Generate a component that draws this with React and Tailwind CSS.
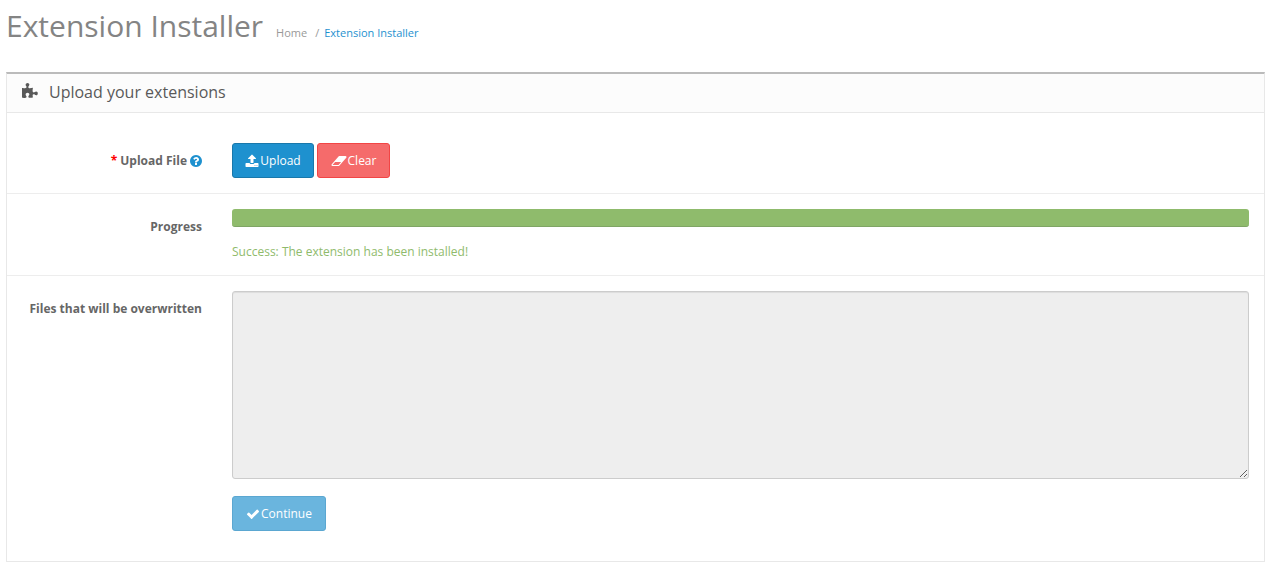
function PuzzleIcon({ className }) {
  return (
    <svg viewBox="0 0 1792 1792" fill="currentColor" className={className}>
      <path d="M1664 1098q0 81-44.5 135t-123.5 54q-41 0-77.5-17.5t-59-38-56.5-38-71-17.5q-110 0-110 124 0 39 16 115t15 115v5q-22 0-33 1-34 3-97.5 11.5t-115.5 13.5-98 5q-61 0-103-26.5t-42-83.5q0-37 17.5-71t38-56.5 38-59 17.5-77.5q0-79-54-123.5t-135-44.5q-84 0-143 45.5t-59 127.5q0 43 15 83t33.5 64.5 33.5 53 15 50.5q0 45-46 89-37 35-117 35-95 0-245-24-9-2-27.5-4t-27.5-4l-13-2q-2-1-3-1-2 0-2-1v-1024q2 1 17.5 3.5t34 5 21.5 3.5q150 24 245 24 80 0 117-35 46-44 46-89 0-22-15-50.5t-33.5-53-33.5-64.5-15-83q0-82 59-127.5t144-45.5q80 0 134 44.5t54 123.5q0 41-17.5 77.5t-38 59-38 56.5-17.5 71q0 57 42 83.5t103 26.5q64 0 180-15t163-17v2q-1 2-3.5 17.5t-5 34-3.5 21.5q-24 150-24 245 0 80 35 117 44 46 89 46 22 0 50.5-15t53-33.5 64.5-33.5 83-15q82 0 127.5 59t45.5 143z" />
    </svg>
  );
}

function UploadIcon({ className }) {
  return (
    <svg viewBox="0 0 1792 1792" fill="currentColor" className={className}>
      <path d="M1344 1472q0-26-19-45t-45-19-45 19-19 45 19 45 45 19 45-19 19-45zm256 0q0-26-19-45t-45-19-45 19-19 45 19 45 45 19 45-19 19-45zm128-224v320q0 40-28 68t-68 28h-1472q-40 0-68-28t-28-68v-320q0-40 28-68t68-28h427q21 56 70.5 92t110.5 36h256q61 0 110.5-36t70.5-92h427q40 0 68 28t28 68zm-325-648q-17 40-59 40h-256v448q0 26-19 45t-45 19h-256q-26 0-45-19t-19-45v-448h-256q-42 0-59-40-17-39 14-69l448-448q18-19 45-19t45 19l448 448q31 30 14 69z" />
    </svg>
  );
}

function EraserIcon({ className }) {
  return (
    <svg viewBox="0 0 2048 1792" fill="currentColor" className={className}>
      <path d="M960 1408l336-384h-768l-336 384h768zm1013-1077q15 34 9.5 71.5t-30.5 65.5l-896 1024q-38 44-96 44h-768q-38 0-69.5-20.5t-47.5-54.5q-15-34-9.5-71.5t30.5-65.5l896-1024q38-44 96-44h768q38 0 70 20.5t47 54.5z" />
    </svg>
  );
}

function CheckIcon({ className }) {
  return (
    <svg viewBox="0 0 1792 1792" fill="currentColor" className={className}>
      <path d="M1671 566q0 40-28 68l-724 724-136 136q-28 28-68 28t-68-28l-136-136-362-362q-28-28-28-68t28-68l136-136q28-28 68-28t68 28l294 295 656-657q28-28 68-28t68 28l136 136q28 28 28 68z" />
    </svg>
  );
}

function QuestionIcon({ className }) {
  return (
    <svg viewBox="0 0 1792 1792" fill="currentColor" className={className}>
      <path d="M1024 1376v-192q0-14-9-23t-23-9h-192q-14 0-23 9t-9 23v192q0 14 9 23t23 9h192q14 0 23-9t9-23zm256-672q0-88-55.5-163t-138.5-116-170-41q-243 0-371 213-15 24 8 42l132 100q7 6 19 6 16 0 25-12 53-68 86-92 34-24 86-24 48 0 85.5 26t37.5 59q0 38-20 61t-68 45q-63 28-115.5 86.5t-52.5 125.5v36q0 14 9 23t23 9h192q14 0 23-9t9-23q0-19 21.5-49.5t54.5-49.5q32-18 49-28.5t46-35 44.5-48 28-60.5 12.5-81zm384 192q0 209-103 385.5t-279.5 279.5-385.5 103-385.5-103-279.5-279.5-103-385.5 103-385.5 279.5-279.5 385.5-103 385.5 103 279.5 279.5 103 385.5z" />
    </svg>
  );
}

function App() {
  return (
    <div className="min-h-[564px] bg-white px-1.5 font-['Open_Sans',sans-serif] text-xs text-[#666]">
      {/* Page header */}
      <div className="flex h-[72px] items-start">
        <h1 className="mt-[5px] text-[30px] leading-[42px] font-normal text-[#848484]">Extension Installer</h1>
        <ul className="ml-[13px] mt-[25px] flex text-[11px] leading-[15px]">
          <li className="text-[#999]">Home</li>
          <li className="ml-[8px] text-[#999]">/</li>
          <li className="ml-[5px] text-[#1e91cf]">Extension Installer</li>
        </ul>
      </div>

      {/* Panel */}
      <div className="w-[1259px] border border-t-2 border-[#e8e8e8] border-t-[#bbb]">
        <div className="flex h-[39px] items-center border-b border-[#e8e8e8] bg-[#fcfcfc] pb-[3px] pl-[15px] text-[#595959]">
          <PuzzleIcon className="h-[17px] w-[17px] text-[#595959]" />
          <h3 className="ml-[10px] text-base leading-[22px] font-normal">Upload your extensions</h3>
        </div>

        <div className="flex h-[81px] items-center border-b border-[#ededed] pt-[15px]">
          <div className="flex w-[195px] items-center justify-end font-bold">
            <span className="mr-[3px] text-[#f00]">*</span>
            Upload File
            <QuestionIcon className="-mr-px ml-[2px] h-[14px] w-[14px] text-[#1e91cf]" />
          </div>
          <div className="ml-[30px] flex gap-[3px]">
            <button className="flex h-[35px] w-[82px] items-center justify-center gap-px rounded-[3px] border border-[#1978ab] bg-[#1e91cf] text-white">
              <UploadIcon className="h-[14px] w-[14px]" />
              Upload
            </button>
            <button className="flex h-[35px] w-[73px] items-center justify-center gap-px rounded-[3px] border border-[#f24545] bg-[#f56b6b] text-white">
              <EraserIcon className="h-[14px] w-[16px]" />
              Clear
            </button>
          </div>
        </div>

        <div className="flex h-[82px] border-b border-[#ededed] pt-[15px]">
          <div className="mt-[9px] w-[195px] text-right leading-[18px] font-bold">Progress</div>
          <div className="ml-[30px] flex-1 pr-[15px]">
            <div className="h-[18px] rounded-[3px] border-b border-[#7fa565] bg-[#8fbb6c]"></div>
            <div className="mt-[16px] leading-[18px] text-[#8fbb6c]">Success: The extension has been installed!</div>
          </div>
        </div>

        <div className="flex h-[285px] pt-[15px]">
          <div className="mt-[9px] w-[195px] text-right leading-[18px] font-bold">Files that will be overwritten</div>
          <div className="ml-[30px] flex-1 pr-[15px]">
            <textarea readOnly className="block h-[188px] w-full rounded-[3px] border border-[#ccc] bg-[#eee] shadow-[inset_0_1px_1px_rgba(0,0,0,0.075)]"></textarea>
            <button className="mt-[17px] flex h-[35px] w-[94px] items-center justify-center gap-px rounded-[3px] border border-[#5ba7d1] bg-[#6ab5de] text-white">
              <CheckIcon className="h-[14px] w-[14px]" />
              Continue
            </button>
          </div>
        </div>
      </div>
    </div>
  );
}

export default App;
